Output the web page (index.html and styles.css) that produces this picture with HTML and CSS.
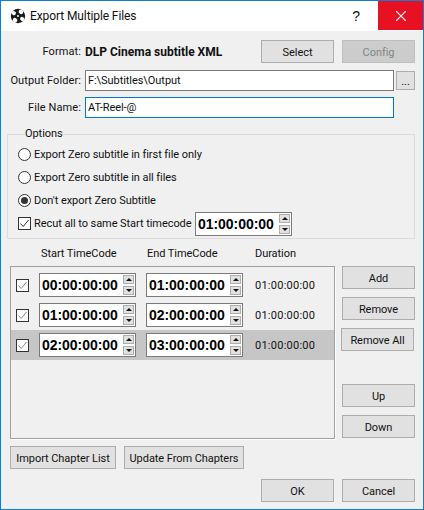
FILE: index.html
```html
<!DOCTYPE html>
<html lang="en">
<head>
<meta charset="utf-8">
<title>Export Multiple Files</title>
<link rel="stylesheet" href="styles.css">
</head>
<body>
<div class="window">
  <header class="titlebar">
    <svg class="app-icon" viewBox="0 0 16 16" width="16" height="16"><circle cx="8" cy="8" r="7.2" fill="#1a1a1a"/><g transform="rotate(35 8 8)"><ellipse cx="8" cy="2.9" rx="2.4" ry="2.2" fill="#fff"/><ellipse cx="2.9" cy="8" rx="2.2" ry="2" fill="#fff"/><ellipse cx="13.1" cy="8" rx="2.2" ry="2" fill="#fff"/><ellipse cx="8" cy="13.1" rx="2.4" ry="2.2" fill="#fff"/></g><circle cx="8" cy="8" r="1" fill="#fff"/></svg>
    <span class="title">Export Multiple Files</span>
    <span class="help">?</span>
    <span class="close"><svg viewBox="0 0 10 10" width="10" height="10"><path d="M0 0L10 10M10 0L0 10" stroke="#fff" stroke-width="1.2"/></svg></span>
  </header>
  <main class="body">
    <div class="row format-row">
      <span class="label">Format:</span>
      <b class="format-name">DLP Cinema subtitle XML</b>
      <button class="btn btn-select">Select</button>
      <button class="btn btn-off">Config</button>
    </div>
    <div class="row folder-row">
      <span class="label">Output Folder:</span>
      <div class="input">F:\Subtitles\Output</div>
      <button class="btn btn-dots">...</button>
    </div>
    <div class="row name-row">
      <span class="label">File Name:</span>
      <div class="input input-focus">AT-Reel-@</div>
    </div>
    <fieldset class="options">
      <legend>Options</legend>
      <label class="opt"><span class="radio"></span>Export Zero subtitle in first file only</label>
      <label class="opt"><span class="radio"></span>Export Zero subtitle in all files</label>
      <label class="opt"><span class="radio radio-on"></span>Don't export Zero Subtitle</label>
      <div class="opt opt-recut">
        <span class="check"><svg viewBox="0 0 13 13" width="13" height="13"><path d="M2.5 6.5L5.2 9.5L10.5 3" fill="none" stroke="#333" stroke-width="1"/></svg></span>
        <span class="recut-text">Recut all to same Start timecode</span>
        <div class="spin"><span class="spin-val">01:00:00:00</span><span class="arrows"><i class="up"></i><i class="down"></i></span></div>
      </div>
    </fieldset>
    <div class="headers">
      <span class="h-start">Start TimeCode</span>
      <span class="h-end">End TimeCode</span>
      <span class="h-dur">Duration</span>
    </div>
    <div class="main">
      <div class="frame">
        <div class="t-row">
          <span class="check check-soft"><svg viewBox="0 0 13 13" width="13" height="13"><path d="M2.5 6.5L5.2 9.5L10.5 3" fill="none" stroke="#8a8a8a" stroke-width="1"/></svg></span>
          <div class="spin"><span class="spin-val">00:00:00:00</span><span class="arrows"><i class="up"></i><i class="down"></i></span></div>
          <div class="spin"><span class="spin-val">01:00:00:00</span><span class="arrows"><i class="up"></i><i class="down"></i></span></div>
          <span class="dur">01:00:00:00</span>
        </div>
        <div class="t-row">
          <span class="check check-soft"><svg viewBox="0 0 13 13" width="13" height="13"><path d="M2.5 6.5L5.2 9.5L10.5 3" fill="none" stroke="#8a8a8a" stroke-width="1"/></svg></span>
          <div class="spin"><span class="spin-val">01:00:00:00</span><span class="arrows"><i class="up"></i><i class="down"></i></span></div>
          <div class="spin"><span class="spin-val">02:00:00:00</span><span class="arrows"><i class="up"></i><i class="down"></i></span></div>
          <span class="dur">01:00:00:00</span>
        </div>
        <div class="t-row t-sel">
          <span class="check check-soft"><svg viewBox="0 0 13 13" width="13" height="13"><path d="M2.5 6.5L5.2 9.5L10.5 3" fill="none" stroke="#8a8a8a" stroke-width="1"/></svg></span>
          <div class="spin"><span class="spin-val">02:00:00:00</span><span class="arrows"><i class="up"></i><i class="down"></i></span></div>
          <div class="spin"><span class="spin-val">03:00:00:00</span><span class="arrows"><i class="up"></i><i class="down"></i></span></div>
          <span class="dur">01:00:00:00</span>
        </div>
      </div>
      <div class="side">
        <button class="btn btn-side">Add</button>
        <button class="btn btn-side">Remove</button>
        <button class="btn btn-side btn-removeall">Remove All</button>
        <button class="btn btn-side btn-up">Up</button>
        <button class="btn btn-side">Down</button>
      </div>
    </div>
    <div class="chapters">
      <button class="btn btn-import">Import Chapter List</button>
      <button class="btn btn-update">Update From Chapters</button>
    </div>
    <div class="footer">
      <button class="btn btn-side">OK</button>
      <button class="btn btn-side">Cancel</button>
    </div>
  </main>
</div>
</body>
</html>
```
FILE: styles.css
```css
* { box-sizing: border-box; }
html, body { margin: 0; padding: 0; }
body {
  width: 424px;
  height: 510px;
  overflow: hidden;
  font-family: Roboto, "Open Sans", sans-serif;
  font-size: 11px;
  letter-spacing: -0.06px;
  color: #111;
}
.window {
  width: 424px;
  height: 510px;
  border: 1px solid #0f7fd6;
  background: #f0f0f0;
  display: flex;
  flex-direction: column;
}
.titlebar {
  height: 30px;
  flex: none;
  background: #fff;
  display: flex;
  align-items: center;
  padding-left: 9px;
}
.app-icon { flex: none; }
.title { margin-left: 4px; font-size: 12px; letter-spacing: -0.1px; color: #111; }
.help { margin-left: auto; font-size: 14px; margin-right: 18px; font-family: "Liberation Sans", sans-serif; }
.close {
  width: 45px;
  height: 29px;
  background: #e81123;
  align-self: flex-start;
  display: flex;
  align-items: center;
  justify-content: center;
}
.body { flex: 1; display: flex; flex-direction: column; padding: 9px 8px 0 9px; }
.row { display: flex; align-items: center; }
.label { width: 71px; margin-right: 4px; text-align: right; white-space: nowrap; flex: none; display: flex; justify-content: flex-end; letter-spacing: 0.1px; }
.format-row { height: 23px; }
.format-name { font-weight: 700; font-size: 12px; letter-spacing: 0; }
.btn {
  height: 23px;
  border: 1px solid #adadad;
  background: #e1e1e1;
  font: inherit;
  letter-spacing: inherit;
  color: #111;
  padding: 1px 0 0;
  flex: none;
  white-space: nowrap;
}
.btn-select { width: 73px; margin-left: auto; }
.btn-off { width: 73px; margin-left: 8px; background: #cccccc; border-color: #bfbfbf; color: #838383; }
.folder-row { margin-top: 7px; height: 21px; }
.name-row { margin-top: 6px; height: 21px; }
.input {
  width: 309px;
  height: 21px;
  border: 1px solid #7a7a7a;
  background: #fff;
  padding: 0 2px;
  line-height: 19px;
  white-space: nowrap;
  flex: none;
}
.input-focus { border-color: #0078d7; }
.btn-dots { width: 19px; height: 19px; margin-left: 2px; line-height: 15px; }
.options {
  margin: 9px 0 0 -3px;
  padding: 2px 0 0 10px;
  border: 1px solid #dcdcdc;
  height: 112px;
  width: 408px;
}
.options legend { padding: 0; margin-left: 7px; line-height: 14px; }
.opt { display: flex; align-items: center; height: 23px; white-space: nowrap; }
.radio {
  width: 13px;
  height: 13px;
  border: 1px solid #333;
  border-radius: 50%;
  background: #fff;
  margin-right: 3px;
  flex: none;
  position: relative;
}
.radio-on::after {
  content: "";
  position: absolute;
  left: 2px;
  top: 2px;
  width: 7px;
  height: 7px;
  border-radius: 50%;
  background: #333;
}
.check {
  width: 13px;
  height: 13px;
  border: 1px solid #333;
  background: #fff;
  flex: none;
  display: block;
  position: relative;
}
.check svg { position: absolute; left: -1px; top: -1px; display: block; }
.opt-recut .check { margin-right: 3px; }
.recut-text { width: 161px; flex: none; }
.spin {
  width: 97px;
  height: 24px;
  border: 1px solid #7a7a7a;
  background: #fff;
  display: flex;
  align-items: center;
  flex: none;
  padding-left: 2px;
}
.spin-val { font-family: "Liberation Sans", sans-serif; font-size: 14px; font-weight: 700; letter-spacing: -0.05px; flex: 1; color: #000; white-space: nowrap; }
.arrows { width: 11px; height: 20px; margin-right: 1px; display: flex; flex-direction: column; gap: 2px; flex: none; }
.arrows i { flex: 1; background: #e1e1e1; border: 1px solid #adadad; display: flex; align-items: center; justify-content: center; }
.arrows i::before { content: ""; width: 0; height: 0; border-left: 3px solid transparent; border-right: 3px solid transparent; }
.arrows .up::before { border-bottom: 3px solid #111; }
.arrows .down::before { border-top: 3px solid #111; }
.headers { height: 27px; padding-top: 2px; display: flex; align-items: center; }
.h-start { margin-left: 31px; width: 106px; }
.h-end { width: 108px; }
.main { display: flex; height: 173px; }
.frame {
  width: 325px;
  border: 1px solid #a0a0a0;
  box-shadow: 1px 1px 0 #fff;
  padding-top: 3px;
  flex: none;
}
.t-row { height: 30px; display: flex; align-items: center; padding-left: 5px; gap: 10px; }
.t-sel { background: #c6c6c6; }
.dur { margin-left: 2px; letter-spacing: 0.25px; }
.side { display: flex; flex-direction: column; gap: 8px; margin-left: 7px; }
.btn-side { width: 73px; }
.side .btn-removeall { margin-left: -1px; }
.side .btn-up { margin-top: 25px; }
.chapters { display: flex; gap: 8px; margin-top: 7px; }
.btn-import { width: 106px; }
.btn-update { width: 120px; }
.footer { display: flex; justify-content: flex-end; gap: 8px; margin-top: 10px; }
```
